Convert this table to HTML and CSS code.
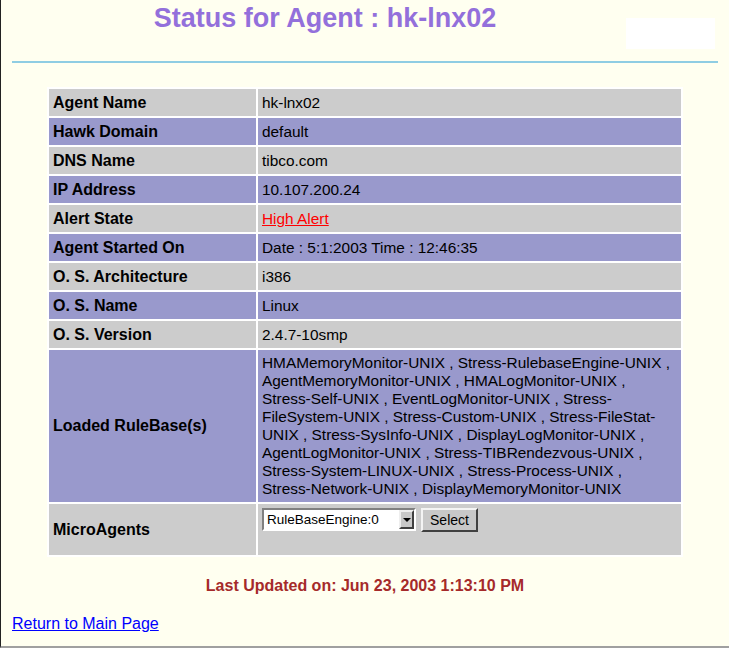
FILE: index.html
```html
<!DOCTYPE html>
<html lang="en">
<head>
    <meta charset="UTF-8">
    <title>Status for Agent : hk-lnx02</title>
    <link rel="stylesheet" href="styles.css">
</head>
<body>
<div class="page">

    <div class="header">
        <h1>Status for Agent : hk-lnx02</h1>
        <div class="logo"></div>
    </div>
    <hr class="rule">

    <table class="status">
        <tr class="odd"><td class="label">Agent Name</td><td class="value">hk-lnx02</td></tr>
        <tr class="even"><td class="label">Hawk Domain</td><td class="value">default</td></tr>
        <tr class="odd"><td class="label">DNS Name</td><td class="value">tibco.com</td></tr>
        <tr class="even"><td class="label">IP Address</td><td class="value">10.107.200.24</td></tr>
        <tr class="odd"><td class="label">Alert State</td><td class="value"><a href="#" class="alert">High Alert</a></td></tr>
        <tr class="even"><td class="label">Agent Started On</td><td class="value">Date : 5:1:2003 Time : 12:46:35</td></tr>
        <tr class="odd"><td class="label">O. S. Architecture</td><td class="value">i386</td></tr>
        <tr class="even"><td class="label">O. S. Name</td><td class="value">Linux</td></tr>
        <tr class="odd"><td class="label">O. S. Version</td><td class="value">2.4.7-10smp</td></tr>
        <tr class="even">
            <td class="label">Loaded RuleBase(s)</td>
            <td class="value multi">HMAMemoryMonitor-UNIX , Stress-RulebaseEngine-UNIX , AgentMemoryMonitor-UNIX , HMALogMonitor-UNIX , Stress-Self-UNIX , EventLogMonitor-UNIX , Stress-FileSystem-UNIX , Stress-Custom-UNIX , Stress-FileStat-UNIX , Stress-SysInfo-UNIX , DisplayLogMonitor-UNIX , AgentLogMonitor-UNIX , Stress-TIBRendezvous-UNIX , Stress-System-LINUX-UNIX , Stress-Process-UNIX , <span class="nowrap">Stress-Network-UNIX</span> , DisplayMemoryMonitor-UNIX</td>
        </tr>
        <tr class="odd micro">
            <td class="label">MicroAgents</td>
            <td class="value picker">
                <form class="pick-form" onsubmit="return false">
                    <div class="combo">
                        <select class="combo-select">
                            <option>RuleBaseEngine:0</option>
                        </select>
                        <span class="combo-btn"><span class="arrow"></span></span>
                    </div>
                    <button class="select-btn">Select</button>
                </form>
            </td>
        </tr>
    </table>

    <p class="updated">Last Updated on: Jun 23, 2003 1:13:10 PM</p>

    <a href="#" class="back">Return to Main Page</a>

</div>
</body>
</html>
```

FILE: styles.css
```css
html, body {
    margin: 0;
    padding: 0;
}

body {
    font-family: 'Liberation Sans', Arial, sans-serif;
    font-size: 16px;
    background: #fffff0;
    color: black;
}

.page {
    box-sizing: border-box;
    min-height: 648px;
    padding: 0 11px 0 11px;
    border-left: 1px solid #222;
    border-bottom: 2px solid #a0a0a0;
}

/* Header */
.header {
    display: flex;
    align-items: flex-start;
}

.header h1 {
    flex: 1;
    margin: 0;
    padding: 3px 0 0 12px;
    font-size: 27px;
    line-height: 31px;
    font-weight: bold;
    text-align: center;
    color: #9370db;
}

.logo {
    width: 89px;
    height: 31px;
    margin: 18px 3px 0 0;
    background: white;
}

.rule {
    height: 2px;
    margin: 12px 0 0 0;
    border: none;
    background: #8fcde3;
}

/* Status table */
.status {
    width: 636px;
    margin: 24px auto 0 auto;
    border-spacing: 2px;
    background: white;
    table-layout: fixed;
}

.status td {
    height: 27px;
    padding: 0 4px;
    line-height: 18px;
    vertical-align: middle;
}

.status .label {
    box-sizing: border-box;
    width: 207px;
    font-weight: bold;
}

.status .value {
    font-size: 15.4px;
}

.status .odd td {
    background: #cccccc;
}

.status .even td {
    background: #9999cc;
}

.status .multi {
    padding: 4px 4px 4px 4px;
}

.nowrap {
    white-space: nowrap;
}

.alert {
    color: red;
}

.micro td {
    height: 51px;
}

.status .picker {
    height: 47px;
    vertical-align: top;
    padding-top: 4px;
}

.pick-form {
    display: flex;
    align-items: flex-start;
    gap: 5px;
    margin: 0;
}

.combo {
    display: flex;
    width: 154px;
    height: 23px;
    box-sizing: border-box;
    border: 2px solid;
    border-color: #808080 #fff #fff #808080;
    background: white;
}

.combo-select {
    flex: 1;
    min-width: 0;
    appearance: none;
    border: none;
    outline: none;
    background: white;
    padding: 0 0 0 3px;
    font-family: 'Liberation Sans', Arial, sans-serif;
    font-size: 13.5px;
    color: black;
}

.combo-btn {
    display: flex;
    align-items: center;
    justify-content: center;
    width: 15px;
    box-sizing: border-box;
    border: 2px solid;
    border-color: #eee #404040 #404040 #eee;
    background: #c8c8c8;
}

.arrow {
    width: 0;
    height: 0;
    border-left: 4px solid transparent;
    border-right: 4px solid transparent;
    border-top: 4px solid black;
}

.select-btn {
    width: 57px;
    height: 24px;
    padding: 0;
    box-sizing: border-box;
    border: 2px solid;
    border-color: #f4f4f4 #404040 #404040 #f4f4f4;
    background: #c8c8c8;
    font-family: 'Liberation Sans', Arial, sans-serif;
    font-size: 14px;
    color: black;
}

/* Footer */
.updated {
    margin: 20px 0 0 0;
    line-height: 18px;
    text-align: center;
    font-weight: bold;
    color: #a52a2a;
}

.back {
    display: inline-block;
    margin-top: 20px;
    line-height: 18px;
    color: blue;
}
```
